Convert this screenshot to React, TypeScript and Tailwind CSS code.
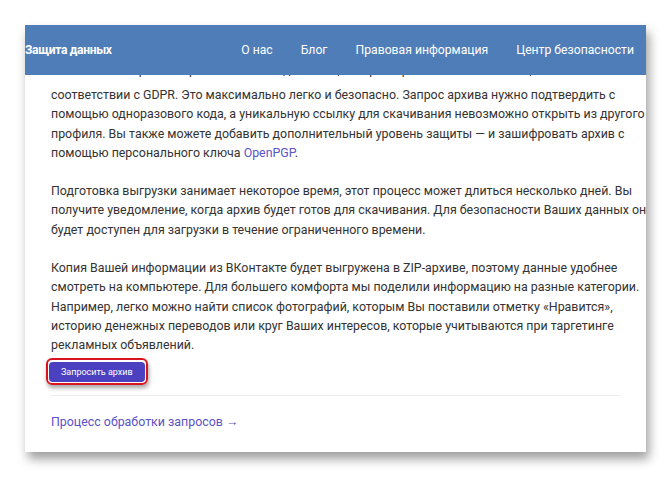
const paragraphOne = [
  'соответствии с GDPR. Это максимально легко и безопасно. Запрос архива нужно подтвердить с',
  'помощью одноразового кода, а уникальную ссылку для скачивания невозможно открыть из другого',
  'профиля. Вы также можете добавить дополнительный уровень защиты — и зашифровать архив с',
];

const paragraphTwo = [
  'Подготовка выгрузки занимает некоторое время, этот процесс может длиться несколько дней. Вы',
  'получите уведомление, когда архив будет готов для скачивания. Для безопасности Ваших данных он',
  'будет доступен для загрузки в течение ограниченного времени.',
];

const paragraphThree = [
  'Копия Вашей информации из ВКонтакте будет выгружена в ZIP-архиве, поэтому данные удобнее',
  'смотреть на компьютере. Для большего комфорта мы поделили информацию на разные категории.',
  'Например, легко можно найти список фотографий, которым Вы поставили отметку «Нравится»,',
  'историю денежных переводов или круг Ваших интересов, которые учитываются при таргетинге',
  'рекламных объявлений.',
];

function Lines({ lines }: { lines: string[] }) {
  return (
    <>
      {lines.map((line) => (
        <span key={line} className="block whitespace-nowrap">
          {line}
        </span>
      ))}
    </>
  );
}

export default function App() {
  const nav = ['О нас', 'Блог', 'Правовая информация', 'Центр безопасности'];

  return (
    <div className="w-[671px] h-[477px] bg-white pt-[25px] pl-[25px] font-['Roboto',sans-serif]">
      <div className="w-[621px] h-[427px] bg-white shadow-[3px_7px_10px_rgba(0,0,0,0.38)] flex flex-col">
        {/* Header */}
        <div className="h-[50px] bg-[#4f7db8] flex items-center text-white shrink-0 relative z-10">
          <span className="text-[12px] font-bold tracking-[-0.3px]">Защита данных</span>
          <nav className="ml-auto flex gap-[28px] pr-[12px] text-[12.2px]">
            {nav.map((item) => (
              <a key={item} className="whitespace-nowrap">
                {item}
              </a>
            ))}
          </nav>
        </div>

        {/* Body, scrolled under the header */}
        <div className="flex-1 overflow-hidden px-[26px] text-[12.4px] leading-[19.3px] text-[#333]">
          <div className="h-[7px] overflow-hidden">
            <span className="block -mt-[15px] whitespace-nowrap">
              Вы можете запросить архив со своими данными, которые хранятся во ВКонтакте, в полном
            </span>
          </div>
          <p className="mt-[3px]">
            <Lines lines={paragraphOne} />
            <span className="block whitespace-nowrap">
              помощью персонального ключа <a className="text-[#5b55c9]">OpenPGP</a>.
            </span>
          </p>
          <p className="mt-[19px]">
            <Lines lines={paragraphTwo} />
          </p>
          <p className="mt-[19px]">
            <Lines lines={paragraphThree} />
          </p>

          <div className="mt-[3px] -ml-[5px] inline-block rounded-[6px] border-[2px] border-[#d9141f] p-[1px] shadow-[1px_3px_4px_rgba(0,0,0,0.35)]">
            <button className="h-[20px] px-[12px] rounded-[4px] bg-[#4b40c0] text-white text-[9px] leading-none">
              Запросить архив
            </button>
          </div>

          <div className="mt-[10px] border-t border-[#ececec]" />

          <a className="block mt-[16px] text-[#5a53c6]">Процесс обработки запросов →</a>
        </div>
      </div>
    </div>
  );
}
